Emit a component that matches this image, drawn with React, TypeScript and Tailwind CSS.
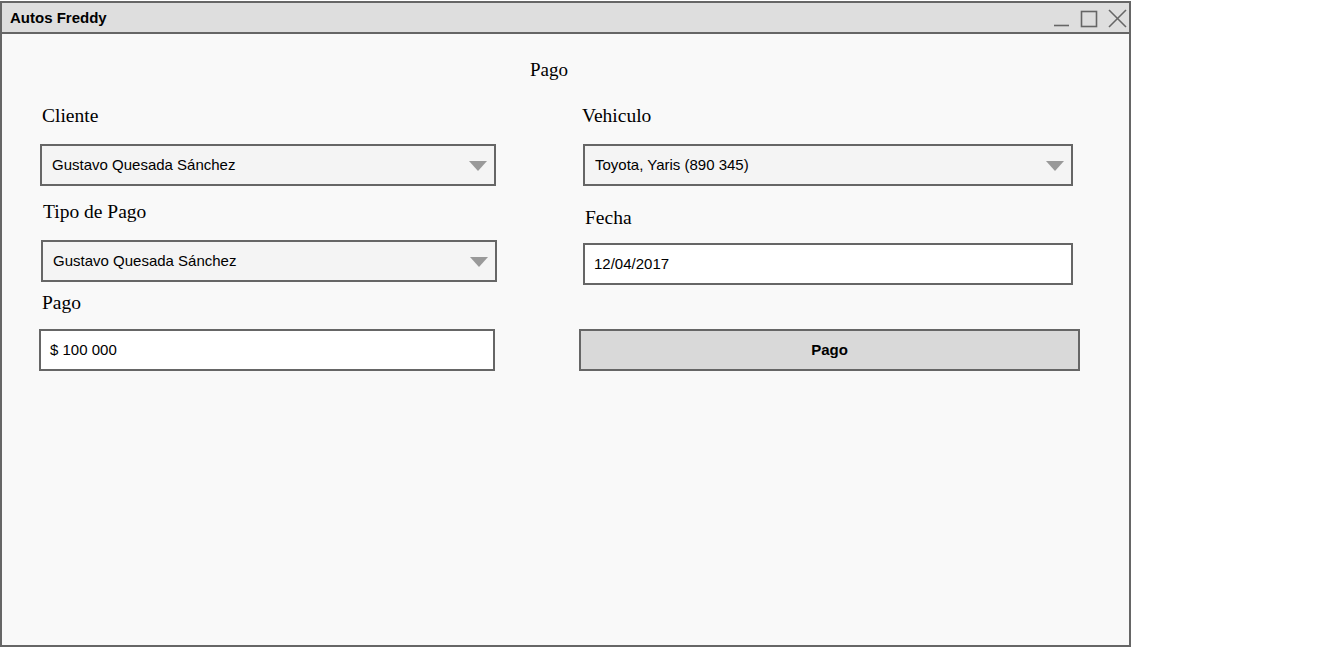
const sans = "font-['Liberation_Sans',Arial,sans-serif]"
const serif = "font-['Liberation_Serif','Times_New_Roman',serif]"

function Caret() {
  return (
    <svg width="18" height="10" viewBox="0 0 18 10" className="shrink-0">
      <polygon points="0,0 18,0 9,10" fill="#999999" />
    </svg>
  )
}

function Select({ value, className }: { value: string; className: string }) {
  return (
    <div
      className={`h-[42px] border-2 border-[#666666] bg-[#f4f4f4] flex items-center justify-between pl-[10px] pr-[7px] pt-px text-[15px] text-black ${sans} ${className}`}
    >
      <span>{value}</span>
      <Caret />
    </div>
  )
}

function TextField({ value, className }: { value: string; className: string }) {
  return (
    <div
      className={`h-[42px] border-2 border-[#666666] bg-white flex items-center pt-px text-[15px] text-black ${sans} ${className}`}
    >
      {value}
    </div>
  )
}

function Label({ children, className }: { children: string; className: string }) {
  return <div className={`text-[19.5px] leading-[24px] text-black ${serif} ${className}`}>{children}</div>
}

export default function App() {
  return (
    <div className="min-h-screen bg-white pt-px">
      <div className="w-[1131px] h-[646px] border-2 border-[#666666] bg-[#f9f9f9] flex flex-col">
        {/* barra de titulo */}
        <div className="h-[31px] border-b-2 border-[#666666] bg-[#dedede] flex items-center justify-between">
          <span className={`pl-[8px] pt-px text-[15px] font-bold text-black ${sans}`}>Autos Freddy</span>
          <svg width="78" height="29" viewBox="0 0 78 29" className="mr-px" fill="none" stroke="#666666" strokeWidth="1.6">
            <line x1="4" y1="22.5" x2="19" y2="22.5" />
            <rect x="31.5" y="8.5" width="15" height="15" />
            <line x1="59" y1="7" x2="76" y2="24" />
            <line x1="76" y1="7" x2="59" y2="24" />
          </svg>
        </div>

        {/* contenido */}
        <div className="flex flex-col">
          <div className={`mt-[24px] ml-[528px] text-[19px] leading-[24px] text-black ${serif}`}>Pago</div>

          <div className="flex mt-[22px]">
            {/* columna izquierda */}
            <div className="flex flex-col ml-[37px] w-[458px]">
              <Label className="ml-[3px]">Cliente</Label>
              <Select value="Gustavo Quesada Sánchez" className="mt-[16px] ml-px w-[456px]" />
              <Label className="mt-[14px] ml-[4px]">Tipo de Pago</Label>
              <Select value="Gustavo Quesada Sánchez" className="mt-[16px] ml-[2px] w-[456px] pl-[9px]" />
              <Label className="mt-[9px] ml-[3px]">Pago</Label>
              <TextField value="$ 100 000" className="mt-[14px] w-[456px] pl-[9px]" />
            </div>

            {/* columna derecha */}
            <div className="flex flex-col ml-[82px]">
              <Label className="ml-[3px]">Vehiculo</Label>
              <Select value="Toyota, Yaris (890 345)" className="mt-[16px] ml-[4px] w-[490px]" />
              <Label className="mt-[20px] ml-[6px]">Fecha</Label>
              <TextField value="12/04/2017" className="mt-[13px] ml-[4px] w-[490px] pl-[9px]" />
              <button
                type="button"
                className={`mt-[44px] w-[501px] h-[42px] border-2 border-[#666666] bg-[#d9d9d9] text-[15px] font-bold text-black ${sans}`}
              >
                Pago
              </button>
            </div>
          </div>
        </div>
      </div>
    </div>
  )
}
